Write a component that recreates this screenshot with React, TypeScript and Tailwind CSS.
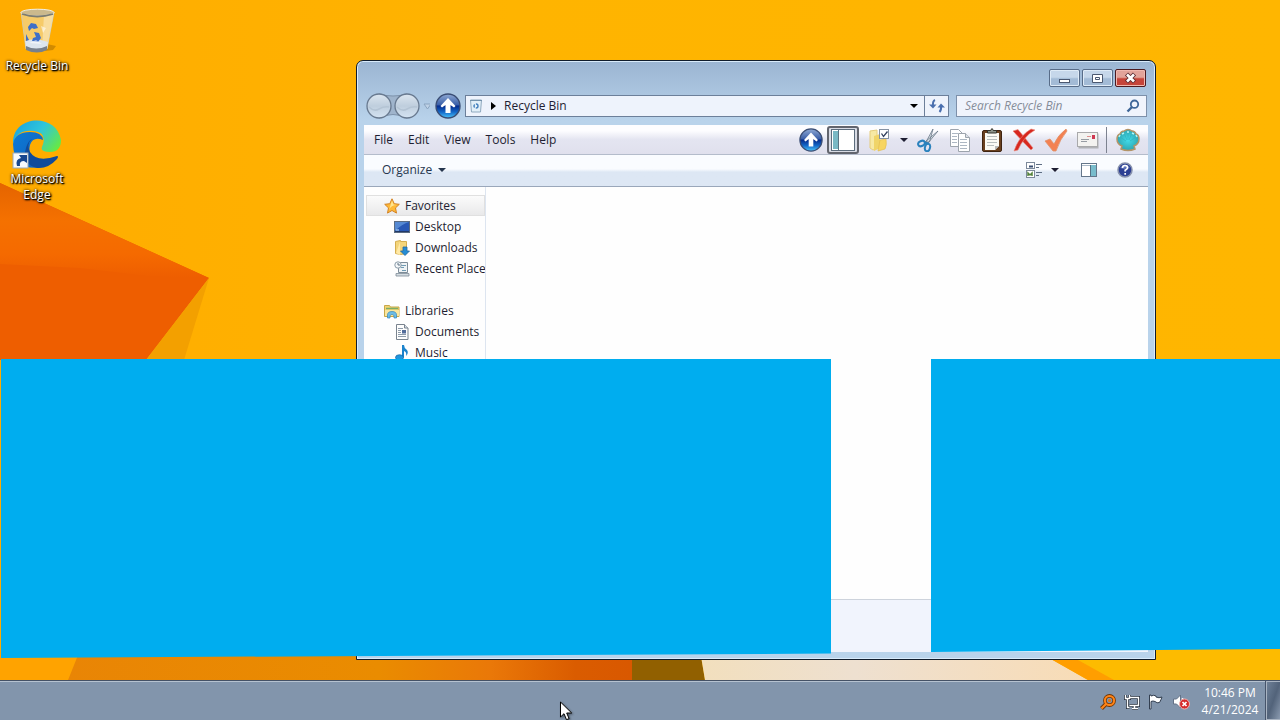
import type { ReactNode } from "react";

type IconProps = { className?: string };

const menus = ["File", "Edit", "View", "Tools", "Help"];

const favorites = [
  { label: "Desktop", icon: <DesktopIcon /> },
  { label: "Downloads", icon: <DownloadsIcon /> },
  { label: "Recent Places", icon: <RecentIcon /> },
];

const libraries = [
  { label: "Documents", icon: <DocumentIcon /> },
  { label: "Music", icon: <MusicIcon /> },
];

const toolbar = [
  { label: "Cut", icon: <CutIcon /> },
  { label: "Copy", icon: <CopyIcon /> },
  { label: "Paste", icon: <ClipboardIcon /> },
  { label: "Delete", icon: <DeleteIcon /> },
  { label: "Properties", icon: <CheckIcon /> },
  { label: "E-mail", icon: <MailIcon /> },
];

export default function App() {
  return (
    <div className="flex h-screen flex-col overflow-hidden bg-[#ffb300] font-['Open_Sans','Noto_Sans',sans-serif] text-xs text-[#1e1e32]">
      <main className="relative min-h-0 flex-1">
        <Wallpaper />
        <div className="relative flex w-[74px] flex-col gap-[45px] pt-2">
          <Shortcut label="Recycle Bin" icon={<BinIcon className="h-12 w-12" />} />
          <Shortcut label="Microsoft Edge" icon={<EdgeIcon className="h-[50px] w-[50px]" />} />
        </div>
        <ExplorerWindow />
        <Panels />
      </main>
      <Taskbar />
      <Cursor />
    </div>
  );
}

function Wallpaper() {
  return (
    <svg
      className="absolute inset-0 h-full w-full"
      viewBox="0 0 1280 680"
      preserveAspectRatio="none"
      aria-hidden="true"
    >
      <defs>
        <linearGradient id="sky" x1="0" x2="1" y1="0" y2="0">
          <stop offset="0" stopColor="#ffac00" />
          <stop offset=".4" stopColor="#ffb400" />
          <stop offset="1" stopColor="#ffb600" />
        </linearGradient>
        <linearGradient id="facet" x1="0" x2="0" y1="0" y2="1">
          <stop offset="0" stopColor="#e46400" />
          <stop offset=".4" stopColor="#f57100" />
          <stop offset=".75" stopColor="#f56a00" />
          <stop offset="1" stopColor="#ee5e00" />
        </linearGradient>
        <linearGradient id="ground" x1="0" x2="1" y1="0" y2="0">
          <stop offset="0" stopColor="#e98505" />
          <stop offset=".55" stopColor="#ea8c00" />
          <stop offset=".75" stopColor="#ea7808" />
          <stop offset=".9" stopColor="#da5c00" />
          <stop offset="1" stopColor="#d95800" />
        </linearGradient>
        <linearGradient id="sand" x1="0" x2="1" y1="0" y2="0">
          <stop offset="0" stopColor="#f2dfbd" />
          <stop offset=".4" stopColor="#eee0d0" />
          <stop offset="1" stopColor="#f8dcb6" />
        </linearGradient>
      </defs>
      <rect width="1280" height="680" fill="url(#sky)" />
      <path d="M0 183L209 278L146 360H0z" fill="#ee5e00" />
      <path d="M0 183L209 278L150 276L80 268L0 264z" fill="url(#facet)" />
      <path d="M209 278L184 360H146z" fill="#f3a000" />
      <path d="M0 650H80L68 680H0z" fill="#ffa300" />
      <path d="M80 650H632V680H68z" fill="url(#ground)" />
      <path d="M632 650H700L705 680H632z" fill="#916000" />
      <path d="M700 650H1035L1088 680H705z" fill="url(#sand)" />
      <path d="M1035 650H1070L1118 680H1088z" fill="#ff9e00" />
      <path d="M1060 650H1280V680H1114z" fill="#fdbb00" />
    </svg>
  );
}

function Shortcut({ label, icon }: { label: string; icon: ReactNode }) {
  return (
    <button type="button" className="flex flex-col items-center gap-0.5 leading-4 text-white">
      {icon}
      <span className="max-w-[72px] [text-shadow:1px_1px_2px_#000,0_0_3px_#000,1px_1px_1px_#000]">{label}</span>
    </button>
  );
}

function ExplorerWindow() {
  return (
    <section
      aria-label="Recycle Bin"
      className="absolute top-[60px] right-[124px] bottom-5 left-[356px] flex flex-col rounded-t-[7px] border border-[#101c2c] bg-linear-to-b from-[#9bb5d2] to-[#b9d3eb] to-10% px-[7px] pb-[7px] shadow-[inset_0_0_0_1px_#d9ebfb]"
    >
      <div className="flex justify-end gap-0.5 pt-2">
        <CaptionButton label="Minimize">
          <rect x="10.500" y="9.500" width="10" height="3" />
        </CaptionButton>
        <CaptionButton label="Maximize">
          <path d="M10.500 4.500h10v8h-10z" />
          <path d="M13.500 7.500h4v2h-4z" />
        </CaptionButton>
        <button
          type="button"
          aria-label="Close"
          className="mr-0.5 h-[18px] w-[31px] rounded-xs border border-[#4c1a20] bg-linear-to-b from-[#e2a39a] from-45% to-[#c5443a] to-55% shadow-[inset_0_0_0_1px_#f0b8b0]"
        >
          <svg viewBox="0 0 29 16" className="h-4 w-[29px]">
            <path d="M10.500 4l8 8M18.500 4l-8 8" stroke="#5b2a30" strokeWidth="4.400" />
            <path d="M11 4.500l7 7M18 4.500l-7 7" stroke="#fff" strokeWidth="2.600" />
          </svg>
        </button>
      </div>
      <AddressRow />
      <MenuBar />
      <div className="flex h-8 shrink-0 items-center border-b border-[#9aa7ba] bg-linear-to-b from-[#fafcff] from-45% to-[#dde7f4] to-55% pr-[15px] pb-0.5 pl-[18px]">
        <button type="button" className="flex items-center gap-1.5 text-[#26364e]">
          Organize <Caret />
        </button>
        <button type="button" aria-label="Change your view" className="ml-auto flex items-center gap-2">
          <ViewsIcon /> <Caret />
        </button>
        <button type="button" aria-label="Preview pane" className="ml-[22px]">
          <PreviewIcon />
        </button>
        <button type="button" aria-label="Help" className="ml-5">
          <HelpIcon />
        </button>
      </div>
      <div className="flex min-h-0 flex-1 bg-[#fefefe]">
        <nav className="w-[122px] shrink-0 overflow-hidden border-r border-[#dde5f0] pt-2">
          <a
            href="#favorites"
            className="ml-0.5 flex h-[21px] items-center gap-[5px] border border-[#e0e0e0] bg-linear-to-b from-[#fbfbfb] to-[#e9e9ea] pl-[17px]"
          >
            <StarIcon /> Favorites
          </a>
          <Places items={favorites} />
          <a href="#libraries" className="mt-[21px] flex h-[21px] items-center gap-[5px] pl-5">
            <LibraryIcon /> Libraries
          </a>
          <Places items={libraries} />
        </nav>
      </div>
      <div className="h-[53px] shrink-0 border-t border-[#cdd3dc] bg-[#f1f4fd]" />
    </section>
  );
}

function CaptionButton({ label, children }: { label: string; children: ReactNode }) {
  return (
    <button
      type="button"
      aria-label={label}
      className="h-[18px] w-[31px] rounded-xs border border-[#586c88] bg-linear-to-b from-[#c6d7ea] from-45% to-[#a3bbd6] to-55% shadow-[inset_0_0_0_1px_#dfebf7]"
    >
      <svg viewBox="0 0 31 16" className="-ml-px h-4 w-[31px]" fill="#fff" stroke="#4b5870">
        {children}
      </svg>
    </button>
  );
}

function AddressRow() {
  return (
    <div className="my-2 flex h-[22px] shrink-0 items-center">
      <svg viewBox="0 0 66 28" className="h-7 w-[66px] shrink-0" aria-hidden="true">
        <defs>
          <linearGradient id="travel" x1="0" x2="0" y1="0" y2="1">
            <stop offset="0" stopColor="#dce6f0" />
            <stop offset=".5" stopColor="#bfcedd" />
            <stop offset="1" stopColor="#d4e3f2" />
          </linearGradient>
        </defs>
        <path d="M15 2Q29 6 43 2V26Q29 19 15 26z" fill="#9fb4cc" stroke="#7d92ab" />
        <circle cx="15" cy="14" r="12" fill="url(#travel)" stroke="#68798f" strokeWidth="1.300" />
        <circle cx="43" cy="14" r="12" fill="url(#travel)" stroke="#68798f" strokeWidth="1.300" />
        <path d="M5 15q5 5 10 2t10-2M33 15q5 5 10 2t10-2" fill="none" stroke="#b4c4d4" strokeWidth="1.500" />
        <path d="M60 12h7l-3.500 5z" fill="#bfd2e6" stroke="#8ba4c0" />
      </svg>
      <button type="button" aria-label="Up" className="ml-[5px]">
        <UpIcon className="h-[26px] w-[26px]" />
      </button>
      <div className="ml-1 flex h-[22px] flex-1 items-center border border-[#6c7f9a] bg-[#eef3fc]">
        <BinGlyph />
        <svg viewBox="0 0 5 8" className="ml-2 h-2 w-[5px]">
          <path d="M0 0l5 4l-5 4z" fill="#000" />
        </svg>
        <span className="ml-2">Recycle Bin</span>
        <button type="button" aria-label="Previous locations" className="ml-auto px-1.5 text-black">
          <Caret />
        </button>
        <button
          type="button"
          aria-label="Refresh"
          className="flex h-full w-6 items-center justify-center border-l border-[#6c7f9a]"
        >
          <svg viewBox="0 0 16 14" className="h-3.5 w-4" fill="none" stroke="#4a6fae" strokeWidth="2">
            <path d="M6 1Q3.500 2 4 7M10.500 13Q12.500 11 12 7" />
            <path d="M0 5.500h7.500L4 9.500zM8.500 8.500H16L12 4.500z" fill="#4a6fae" stroke="none" />
          </svg>
        </button>
      </div>
      <label className="mr-px ml-[7px] flex h-[22px] w-[191px] items-center border border-[#7d90aa] bg-[#f0f4fc] pr-1.5">
        <input
          type="search"
          aria-label="Search Recycle Bin"
          placeholder="Search Recycle Bin"
          className="min-w-0 flex-1 bg-transparent pl-2 italic outline-none placeholder:text-[#868d99]"
        />
        <svg viewBox="0 0 14 14" className="h-3.5 w-3.5" fill="none" stroke="#3f6698">
          <circle cx="8.500" cy="5.200" r="3.700" strokeWidth="1.800" />
          <path d="M6 8L1.500 12.500" strokeWidth="2.400" />
        </svg>
      </label>
    </div>
  );
}

function MenuBar() {
  return (
    <div className="flex h-[30px] shrink-0 items-center border-b border-[#b4bccb] bg-linear-to-b from-[#fdfdff] from-20% via-[#e4e5f1] via-50% to-[#e0e0ed] pr-1">
      <div className="flex gap-[15px] pl-2.5">
        {menus.map((m) => (
          <button key={m} type="button">
            {m}
          </button>
        ))}
      </div>
      <div className="ml-auto flex items-center">
        <button type="button" aria-label="Up one level" className="flex w-8 justify-center">
          <UpIcon className="h-6 w-6" />
        </button>
        <button
          type="button"
          aria-label="Navigation pane"
          className="flex h-7 w-8 items-center justify-center rounded-[3px] border-2 border-[#62656e] bg-[#d8dbe4]"
        >
          <svg viewBox="0 0 24 22" className="h-[22px] w-6">
            <rect x=".5" y=".5" width="23" height="21" fill="#fff" stroke="#5c6c7c" />
            <path d="M2 2h5v18H2z" fill="#79b8c4" />
            <path d="M7.500 1v20" stroke="#5a7482" />
          </svg>
        </button>
        <button type="button" aria-label="Folder options" className="flex w-[53px] items-center justify-end gap-2.5 pr-1">
          <FolderOptionsIcon />
          <Caret />
        </button>
        {toolbar.map((t) => (
          <button key={t.label} type="button" aria-label={t.label} className="flex w-8 justify-center">
            {t.icon}
          </button>
        ))}
        <div className="ml-0.5 h-[26px] w-px bg-[#7d8290]" />
        <button type="button" aria-label="Classic Shell" className="ml-[5px] flex w-8 justify-center">
          <ShellIcon />
        </button>
      </div>
    </div>
  );
}

function Places({ items }: { items: { label: string; icon: ReactNode }[] }) {
  return (
    <ul>
      {items.map((i) => (
        <li key={i.label}>
          <a href="#place" className="flex h-[21px] items-center gap-[5px] pl-[30px] whitespace-nowrap">
            {i.icon} {i.label}
          </a>
        </li>
      ))}
    </ul>
  );
}

// Two flat blocks lying over the desktop, with slightly slanted lower edges
function Panels() {
  return (
    <div className="absolute top-[359px] right-0 bottom-[22px] left-px flex gap-[100px]">
      <div className="flex-1 bg-[#00adef] [clip-path:polygon(0_0,100%_0,100%_98.5%,0_100%)]" />
      <div className="w-[349px] bg-[#00adef] [clip-path:polygon(0_0,100%_0,100%_97%,0_98%)]" />
    </div>
  );
}

function Taskbar() {
  return (
    <footer className="flex h-10 shrink-0 items-stretch border-t border-[#455266] bg-[#8295ac] text-white shadow-[inset_0_1px_0_#b6c2d0]">
      <div className="ml-auto flex items-center gap-2 pt-0.5 pr-2.5">
        <button type="button" aria-label="Search tool">
          <svg viewBox="0 0 16 16" className="h-4 w-4" fill="none">
            <path d="M6 10L1.500 14.500" stroke="#713500" strokeWidth="4" />
            <circle cx="9.500" cy="6.500" r="4.600" stroke="#713500" strokeWidth="3.600" />
            <path d="M6 10L1.500 14.500" stroke="#ff8418" strokeWidth="2.200" />
            <circle cx="9.500" cy="6.500" r="4.600" stroke="#ff8418" strokeWidth="2" />
            <circle cx="9.500" cy="6.500" r="1.500" fill="#e8740c" />
          </svg>
        </button>
        <button type="button" aria-label="Network">
          <svg viewBox="0 0 16 16" className="h-4 w-4" fill="none">
            <path d="M6 3.500h8.500v8H5.500M8 14.500h6M10.500 12v2M1.500 1v3.500h4V1M3.500 4.500v9h2" stroke="#26303e" strokeWidth="3" />
            <path d="M6 3.500h8.500v8H5.500M8 14.500h6M10.500 12v2M1.500 1v3.500h4V1M3.500 4.500v9h2" stroke="#fff" strokeWidth="1.400" />
          </svg>
        </button>
        <button type="button" aria-label="Action Center">
          <svg viewBox="0 0 16 16" className="h-4 w-4">
            <path d="M1.500 1h1.500v1q3-1.500 5 0v1q3 1.500 6 0q-1 3-2.500 5.500q-2.500 1-4.500-1q-2-1-4 0V15H1.500z" fill="#fff" stroke="#333f50" />
          </svg>
        </button>
        <button type="button" aria-label="Volume muted" className="ml-px">
          <svg viewBox="0 0 17 16" className="h-4 w-[17px]">
            <path d="M.5 5h3l4-4v13l-4-4h-3z" fill="#fff" stroke="#647287" />
            <path d="M9.500 4v7" stroke="#fff" strokeWidth="1.500" />
            <circle cx="11.500" cy="10" r="5" fill="#d52b2b" stroke="#f3b1ad" />
            <path d="M9.500 8l4 4M13.500 8l-4 4" stroke="#fff" strokeWidth="1.700" />
          </svg>
        </button>
      </div>
      <div className="flex w-[60px] flex-col items-center pt-[3px] leading-[17px] whitespace-nowrap">
        <time>10:46 PM</time>
        <time>4/21/2024</time>
      </div>
      <button
        type="button"
        aria-label="Show desktop"
        className="ml-1.5 w-3.5 border border-r-0 border-[#a9b4c2] bg-linear-to-br from-[#6e8097] via-[#52637a] to-[#8a9aaf] outline outline-[#46546a]"
      />
    </footer>
  );
}

function Cursor() {
  return (
    <svg
      viewBox="0 0 13 20"
      className="pointer-events-none absolute top-[701px] left-[560px] h-5 w-[13px] drop-shadow-[1px_1px_1px_#00000070]"
      aria-hidden="true"
    >
      <path d="M.5 1v15l3.500-3.300l2.500 6l2.600-1.100L6.700 12h5z" fill="#fff" stroke="#000" />
    </svg>
  );
}

function Caret() {
  return (
    <svg viewBox="0 0 8 4" className="h-1 w-2">
      <path d="M0 0h8l-4 4z" fill="currentColor" />
    </svg>
  );
}

function BinIcon({ className }: IconProps) {
  return (
    <svg viewBox="0 0 48 48" className={className}>
      <path d="M34 36l9 2l-3 4l-8 1z" fill="#a36a00" opacity=".5" />
      <path d="M8 4L13 41Q23 46 34 41L41 4z" fill="#f3d58c" fillOpacity=".75" stroke="#d4cba9" />
      <path d="M31 6L29 42L34 41L41 4z" fill="#fff" fillOpacity=".35" />
      <path d="M12 33Q22 29 35 34L34 40Q24 45 13 40z" fill="#dce5ee" />
      <path d="M13 38Q23 43 34 38V42Q24 47 13 42z" fill="#77808c" />
      <path d="M15 19l3-4l5 1l2 4l-4 1l-2-1l-3 3zM21 24l5 1l2 5l-3 4l-6-1l1-3l3-1zM13 26l3 6l-3 1z" fill="#3d6fc9" />
      <path d="M28 18l5 2l-3 5zM16 35l7-3l6 4" fill="#ffffff90" />
      <ellipse cx="24.500" cy="4.500" rx="16.500" ry="3.300" fill="#cbb98d" stroke="#f2f0e8" />
      <path d="M9 6Q24 11 40 6" fill="none" stroke="#7c7c70" strokeWidth="1.800" />
    </svg>
  );
}

function EdgeIcon({ className }: IconProps) {
  return (
    <svg viewBox="0 0 50 50" className={className}>
      <defs>
        <linearGradient id="edgeTop" x1="0" x2="1" y1=".2" y2=".7">
          <stop offset="0" stopColor="#1ca5dc" />
          <stop offset=".5" stopColor="#2fc5dc" />
          <stop offset="1" stopColor="#66e847" />
        </linearGradient>
        <linearGradient id="edgeSide" x1="0" x2="1" y1="0" y2="1">
          <stop offset="0" stopColor="#0c7bd5" />
          <stop offset="1" stopColor="#1260bd" />
        </linearGradient>
      </defs>
      <path d="M1 25C0-5 45-6 49 21Q49 33 38 33Q28 33 30 28Q36 14 22 12Q5 10 1 25z" fill="url(#edgeTop)" />
      <path d="M1 25Q3 13 18 13Q30 13 31 21Q21 17 18 26Q14 45 31 48Q2 53 1 25z" fill="url(#edgeSide)" />
      <path d="M20 20Q14 25 18 33Q25 44 45 37Q47 37 45 40Q36 50 25 49Q9 45 14 29Q16 22 20 20z" fill="#104b9b" />
      <rect x="1" y="34" width="15" height="15" fill="#f7fafc" stroke="#9baab8" />
      <path d="M5 47Q3 40 9 39L7 36h8v8l-3-2Q7 42 8 47z" fill="#17468e" />
    </svg>
  );
}

function UpIcon({ className }: IconProps) {
  return (
    <svg viewBox="0 0 26 26" className={className}>
      <defs>
        <linearGradient id="up" x1="0" x2="0" y1="0" y2="1">
          <stop offset="0" stopColor="#8fa9d4" />
          <stop offset=".45" stopColor="#3a5fa8" />
          <stop offset=".5" stopColor="#062c8c" />
          <stop offset=".75" stopColor="#1468c8" />
          <stop offset="1" stopColor="#4cc6fb" />
        </linearGradient>
      </defs>
      <circle cx="13" cy="13" r="12" fill="url(#up)" stroke="#3a4d74" strokeWidth="1.400" />
      <path d="M13 5l7.500 8l-1.500 1.500l-3.500-2.500V20h-5v-8L7 14.500L5.500 13z" fill="#fff" />
    </svg>
  );
}

function BinGlyph() {
  return (
    <svg viewBox="0 0 14 14" className="ml-[3px] h-3.5 w-3.5" fill="none">
      <path d="M1.500 1h11l-1 12h-9z" fill="#e2eff8" stroke="#8fa9bf" />
      <path d="M1 1.500h12" stroke="#7493ad" />
      <circle cx="7" cy="7" r="2" stroke="#4480bd" strokeWidth="1.400" strokeDasharray="3 1.200" />
    </svg>
  );
}

function FolderOptionsIcon() {
  return (
    <svg viewBox="0 0 22 24" className="h-6 w-[22px]">
      <path d="M2 3l7-1v18l-4 2l-3-2z" fill="#f7e9a4" stroke="#e6cd7c" />
      <path d="M6 8l6-2v14l-6 3z" fill="#f0d468" />
      <path d="M12 12l6-1q1 6-1 10l-7 2z" fill="#f7d561" stroke="#e4bf50" strokeWidth=".7" />
      <rect x="11.500" y="1.500" width="9" height="9" fill="#fff" stroke="#8592a3" />
      <path d="M13.500 5.500l2 3l4-5" fill="none" stroke="#303e5c" strokeWidth="1.300" />
    </svg>
  );
}

function CutIcon() {
  return (
    <svg viewBox="0 0 22 24" className="h-6 w-[22px]" fill="none">
      <path d="M9 14L16 1L12.500 14zM8 14L21 3L11 15z" fill="#dbe3e9" stroke="#697988" strokeWidth=".8" />
      <ellipse cx="4.500" cy="15.500" rx="3.500" ry="2.500" transform="rotate(-25 4.500 15.500)" stroke="#2b82bd" strokeWidth="2" />
      <ellipse cx="10.500" cy="19.500" rx="2.500" ry="3.800" transform="rotate(15 10.500 19.500)" stroke="#2b82bd" strokeWidth="2" />
      <path d="M7 14.500l4.500 1" stroke="#2b82bd" strokeWidth="2" />
    </svg>
  );
}

function CopyIcon() {
  return (
    <svg viewBox="0 0 22 24" className="h-6 w-[22px]" stroke="#9da4ad">
      <path d="M1.500 1.500h8l4 4v13h-12z" fill="#fff" />
      <path d="M9.500 5.500h7l4 4v14h-11z" fill="#fff" />
      <path d="M16.500 5.500v4h4" fill="#dbe0e7" />
      <path d="M3 5.500h6M3 8.500h5M3 11.500h5M3 14.500h5M11 11.500h7M11 14.500h7M11 17.500h7M11 20.500h7" stroke="#adb7c3" />
    </svg>
  );
}

function ClipboardIcon() {
  return (
    <svg viewBox="0 0 22 24" className="h-6 w-[22px]">
      <rect x="1.500" y="2.500" width="19" height="21" rx="1.500" fill="#69401f" stroke="#3f2411" />
      <path d="M4 5h14v13l-4 4H4z" fill="#fbfbf5" />
      <path d="M18 18h-4v4z" fill="#b9bdbd" />
      <path d="M6 8.500h10M6 11.500h10M6 14.500h10M6 17.500h7" stroke="#b8bebd" />
      <path d="M6.500 5V2.500h3L11 .5l1.500 2h3V5z" fill="#8c938a" stroke="#33332b" />
    </svg>
  );
}

function DeleteIcon() {
  return (
    <svg viewBox="0 0 24 24" className="h-6 w-6" fill="#d7281f" stroke="#e8897c" strokeWidth=".6">
      <path d="M1 3l5-1.500Q13 10 21 20l-2 2Q9 12 1 3z" />
      <path d="M23 2Q12 8 6 22l-4 1Q7 8 19 1z" />
    </svg>
  );
}

function CheckIcon() {
  return (
    <svg viewBox="0 0 24 24" className="h-6 w-6">
      <path d="M1 13l5-2l4 5Q14 7 22 1l1 2Q16 11 12 23H9z" fill="#f38152" stroke="#e09269" strokeWidth=".8" />
    </svg>
  );
}

function MailIcon() {
  return (
    <svg viewBox="0 0 22 18" className="h-[18px] w-[22px]">
      <rect x="1.500" y="2.500" width="20" height="15" fill="#9b9c9d" opacity=".7" />
      <rect x=".5" y="1.500" width="20" height="14" fill="#f3f2f0" stroke="#a9a9ab" />
      <path d="M15 4h3v4h-3z" fill="#cf3852" />
      <path d="M4 8.500h8M4 10.500h6" stroke="#979ca3" />
      <path d="M10 5.500h4" stroke="#dd8e8e" />
    </svg>
  );
}

function ShellIcon() {
  return (
    <svg viewBox="0 0 24 24" className="h-6 w-6">
      <defs>
        <radialGradient id="shell">
          <stop offset="0" stopColor="#42ddeb" />
          <stop offset="1" stopColor="#2fa6b0" />
        </radialGradient>
      </defs>
      <path
        d="M6 18Q1 16 1 11Q1 7 4 6Q5 3 8 3Q12 0 16 3Q19 3 20 6Q23 7 23 11Q23 16 18 18L19 21Q12 24 5 21z"
        fill="url(#shell)"
        stroke="#b39468"
        strokeWidth="1.500"
      />
      <path d="M10 13L4 9M11 12L8 5M12 12V4M13 12L16 5M14 13L20 9" stroke="#2fb1bf" strokeWidth=".7" />
      <path d="M3 9l1-2M6 6l2-1M11 4h2M16 5l2 1M20 7l1 2" stroke="#b2f4f5" strokeWidth="1.500" />
    </svg>
  );
}

function ViewsIcon() {
  return (
    <svg viewBox="0 0 17 16" className="h-4 w-[17px]">
      <rect x=".5" y=".5" width="8" height="6" fill="#fff" stroke="#7c899a" />
      <rect x=".5" y="8.500" width="8" height="7" fill="#fff" stroke="#7c899a" />
      <path d="M3 4.500h4" stroke="#3a4f73" strokeWidth="2" />
      <path d="M2 14v-3l2 2l2-2v3" stroke="#53823d" fill="none" strokeWidth="1.500" />
      <path d="M10 2.500h6M10 5.500h3M10 10.500h6M10 13.500h3" stroke="#5d6d83" />
    </svg>
  );
}

function PreviewIcon() {
  return (
    <svg viewBox="0 0 16 14" className="h-3.5 w-4">
      <rect x=".5" y=".5" width="15" height="13" fill="#fff" stroke="#64768a" />
      <path d="M1 2.500h14" stroke="#aab9c8" />
      <path d="M10 2h5v11h-5z" fill="#78bccc" />
      <path d="M9.500 2v11" stroke="#557184" />
    </svg>
  );
}

function HelpIcon() {
  return (
    <svg viewBox="0 0 16 16" className="h-4 w-4">
      <circle cx="8" cy="8" r="7" fill="#2c3f93" stroke="#8690ac" strokeWidth="1.500" />
      <path d="M3 6Q8-1 13 6Q8 8 3 6z" fill="#7f92d1" opacity=".6" />
      <path d="M5.500 6Q5.500 3.500 8 3.500Q10.800 3.500 10.500 6Q10 7.500 8.200 8.200V9.500M8.200 11v1.800" fill="none" stroke="#fff" strokeWidth="1.700" />
    </svg>
  );
}

function StarIcon() {
  return (
    <svg viewBox="0 0 16 16" className="h-4 w-4 shrink-0">
      <path d="M8 .8l2.200 4.900l5.100.6l-3.800 3.600l1 5.200L8 12.500l-4.500 2.600l1-5.200L.7 6.300l5.100-.6z" fill="#ffb936" stroke="#d28225" />
      <path d="M8 2.500l1.500 4l3.500.5Q7 7 5 12z" fill="#ffe48e" />
    </svg>
  );
}

function DesktopIcon() {
  return (
    <svg viewBox="0 0 16 16" className="h-4 w-4 shrink-0">
      <rect x=".5" y="2.500" width="15" height="11" fill="#2858b5" stroke="#5a6b82" />
      <path d="M1 3h14Q8 5 1 12z" fill="#5589d3" />
      <path d="M1 12.500h14" stroke="#223967" />
      <path d="M2 11h3" stroke="#bfe3fb" />
    </svg>
  );
}

function DownloadsIcon() {
  return (
    <svg viewBox="0 0 16 16" className="h-4 w-4 shrink-0">
      <path d="M1.500 1.500l5-1v1h6v12l-6 1l-5-1z" fill="#f4d57b" stroke="#d5ae50" />
      <path d="M6 2v13l-4-2" fill="#ffe9a6" />
      <path d="M9 7h4v4h2.500L11 15.500L6.500 11H9z" fill="#258dd4" stroke="#2167a2" strokeWidth=".8" />
    </svg>
  );
}

function RecentIcon() {
  return (
    <svg viewBox="0 0 16 16" className="h-4 w-4 shrink-0">
      <path d="M4.500 1.500h9v10h-9z" fill="#eef2f4" stroke="#7d8c98" />
      <path d="M2 12.500h13v2.500H2z" fill="#d4dce1" stroke="#7d8c98" strokeWidth=".8" />
      <path d="M7 4.500h5M7 6.500h3M8 9.500h4" stroke="#6f9ab3" />
      <circle cx="4" cy="4" r="3.200" fill="#f5f8fa" stroke="#8a9ba8" />
      <path d="M4 2v2h2" fill="none" stroke="#5f7385" />
    </svg>
  );
}

function LibraryIcon() {
  return (
    <svg viewBox="0 0 16 16" className="h-4 w-4 shrink-0">
      <path d="M.5 2.500h5l1 1.500h8.500v9.500H.5z" fill="#f3d473" stroke="#c8a849" />
      <path d="M2 5.500h12" stroke="#7cae66" strokeWidth="1.500" />
      <path d="M1 7h14v6H1z" fill="#fae69e" />
      <path d="M3.500 15V12Q3.500 8.500 8 8.500Q12.500 8.500 12.500 12v3H10v-2.500Q8 10 6 12.500V15z" fill="#6cbce6" stroke="#3487bc" strokeWidth=".7" />
    </svg>
  );
}

function DocumentIcon() {
  return (
    <svg viewBox="0 0 16 16" className="h-4 w-4 shrink-0">
      <path d="M2.500.5h8l3.500 3.500v11.500H2.500z" fill="#fdfdfd" stroke="#79838e" />
      <path d="M10.500.5V4H14" fill="#d5dde5" stroke="#79838e" />
      <path d="M4 4.500h5M4 6.500h3M4 8.500h3M4 10.500h8M4 12.500h8" stroke="#8d9baa" />
      <path d="M8 6h4v3.500H8z" fill="#526c9a" />
    </svg>
  );
}

function MusicIcon() {
  return (
    <svg viewBox="0 0 16 16" className="h-4 w-4 shrink-0">
      <path d="M8 0h2Q10 3 13 5Q15 8 12 11Q13 7 10 6v6.500H8z" fill="#1c83cc" />
      <ellipse cx="5.500" cy="12.500" rx="4" ry="2.800" fill="#2196dd" stroke="#1764a1" strokeWidth=".7" />
    </svg>
  );
}
